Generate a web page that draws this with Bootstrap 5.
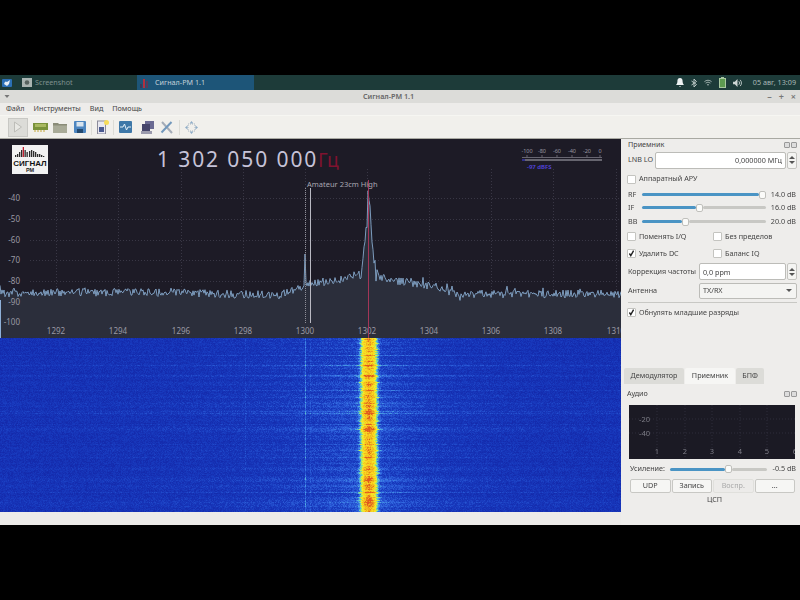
<!DOCTYPE html>
<html lang="ru">
<head>
<meta charset="utf-8">
<title>Сигнал-РМ 1.1</title>
<link href="https://cdn.jsdelivr.net/npm/bootstrap@5.3.0/dist/css/bootstrap.min.css" rel="stylesheet">
<style>
html,body{height:600px;overflow:hidden;background:#000}
body{font-family:"Noto Sans","Open Sans",sans-serif;font-size:7.2px;line-height:1;color:#333}
span,label{white-space:nowrap}
.app{height:600px;display:flex;flex-direction:column;filter:blur(.3px)}
.blackband{height:75px;flex:none;background:#000}
.blackfoot{flex:1;background:#000}
.taskbar{height:15px;flex:none;background:#1d3b39;color:#7f918f;padding-left:2px}
.taskbtn{height:15px;display:flex;align-items:center}
.task-shot{width:125px;padding-left:10px;gap:3px}
.task-act{width:117px;background:#1d5578;color:#c4d2da;padding-left:3px;gap:5px}
.tray{margin-left:auto;gap:7px;padding-right:4px;color:#a9b8b6}
.titlebar{height:13px;flex:none;background:#dcdcd9;color:#666;font-weight:600;padding:0 4px}
.titlebar .ttl{flex:1;text-align:center}
.wm{gap:7px;color:#777;font-size:9px}
.menubar{height:13px;flex:none;background:#edecea;padding-left:6px;color:#444;border-bottom:1px solid #f6f6f2;gap:9px}
.toolbar{height:23px;flex:none;background:#f1f0ec;border-bottom:1px solid #a9a9a2;padding-left:8px}
.toolbtn{width:20px;height:19px;display:flex;align-items:center;justify-content:center;flex:none}
.tool-nar{width:18px}
.tool-off{background:#dcdcd8;border:1px solid #c8c8c4}
.toolsep{width:1px;height:15px;background:#dcdcd6;flex:none}
.ml1{margin-left:1px}.ml2{margin-left:2px}
.workarea{height:386px;flex:none;display:flex}
.leftside{width:621px;flex:none;display:flex;flex-direction:column;background:#ecebe9}
.leftside svg{display:block}
.leftside canvas{display:block;filter:blur(.5px);clip-path:inset(0)}
.rightside{flex:1;min-width:0;background:#eeedeb;display:flex;flex-direction:column;color:#444}
.upperdock{height:229px;flex:none;display:grid;grid-template-rows:12px 18px 20px 11px 15px 13px 17px 17px 19px 19px 4px 17px;padding:0 3px 0 7px;align-items:center}
.rowline{display:flex;align-items:center;min-width:0}
.dockttl{justify-content:space-between}
.dockbtns{display:flex;gap:1px}
.dockbtns i{display:block;width:6px;height:6px;border:1px solid #999;border-radius:1px;background:#ddd}
.lbl1{width:27px;flex:none}
.lbl2{width:14px;flex:none}
.lblw{width:71px;flex:none}
.form-control.fld,.form-select.fld{height:17px;min-height:0;border-radius:2px;font-size:7.2px;padding:0 3px;line-height:1;border:1px solid #bcbcb8;color:#444;background-color:#fff}
.form-select.fld{height:16px;background-color:#f4f4f2;background-image:url("data:image/svg+xml,%3csvg xmlns='http://www.w3.org/2000/svg' viewBox='0 0 8 4'%3e%3cpath fill='%23555' d='M0 0h8L4 4z'/%3e%3c/svg%3e");background-size:6px 3px;background-position:right 4px center;flex:1;min-width:0}
.spin{width:10px;height:17px;flex:none;margin-left:1px;display:flex;flex-direction:column;align-items:center;justify-content:center;gap:2px;border:1px solid #c4c4c0;border-radius:2px;background:#f4f4f2}
.spin i{display:block;width:0;height:0;border-left:3px solid transparent;border-right:3px solid transparent}
.spin i:first-child{border-bottom:3px solid #555}
.spin i:last-child{border-top:3px solid #555}
.chk{display:flex;align-items:center;gap:3px;margin:0 0 0 -1px;min-height:0;padding:0}
.chk .form-check-input{width:9px;height:9px;margin:0;float:none;border:1px solid #c4c4c0;border-radius:1px;background-color:#fff;flex:none;box-shadow:none}
.chk .form-check-input:checked{background-color:#fff;border-color:#c4c4c0;background-image:url("data:image/svg+xml,%3csvg xmlns='http://www.w3.org/2000/svg' viewBox='0 0 10 10'%3e%3cpath fill='none' stroke='%23222' stroke-width='2' d='M2 5l2 3 4-7'/%3e%3c/svg%3e");background-size:100%}
.chk .form-check-label{opacity:1!important;color:#444}
.halfl{width:87px;flex:none}
.track{display:flex;align-items:center;flex:none;height:9px}
.seg{height:3px;border-radius:2px}
.seg-on{background:#4a94c4}
.seg-off{background:#c8c8c4;flex:1}
.thumb{width:7px;height:8px;flex:none;background:#fbfbf9;border:1px solid #c0c0bc;border-radius:2px}
.sl-main{width:124px}
.sl-gain{width:97px}
.val{flex:1;text-align:right;padding-right:1px;white-space:nowrap}
.rule{height:1px;background:#c8c8c4}
.tabsrow{height:16px;flex:none;padding-left:3px;border:0;gap:1px;flex-wrap:nowrap;background:transparent}
.tabsrow .nav-link{height:16px;display:flex;align-items:center;justify-content:center;padding:0;font-size:7.2px;color:#444;background:#dcdcd8;border:0;border-radius:2px 2px 0 0;margin:0}
.tabsrow .nav-link.active{background:#f6f6f4;color:#444}
.tab-a{width:60px}.tab-b{width:50px}.tab-c{width:28px}
.audiodock{flex:1;padding:0 3px 0 6px}
.audhead{height:12px;margin-top:4px;margin-bottom:5px}
.audplot{width:166px;height:54px;margin-left:2px;display:block;overflow:hidden}
.gainrow{height:14px;margin-top:3px;margin-left:3px}
.gainrow .glab{width:40px;flex:none}
.btnrow{margin-top:3px;margin-left:3px;gap:1px;width:165px}
.btnrow .btn{flex:1;height:14px;padding:0;font-size:7.2px;line-height:1;border-radius:2px;background:#f6f6f4;border:1px solid #c8c8c4;color:#444}
.btnrow .btn:disabled{color:#aaa;background:#ecebe9;border-color:#e0e0dc;opacity:1}
.dspnote{text-align:center;margin-top:3px;padding-left:5px;height:10px}
</style>
</head>
<body>
<div class="app">
  <div class="blackband"></div>

  <div class="taskbar d-flex align-items-center">
    <svg width="10" height="10" viewBox="0 0 10 10"><rect x="0" y="1" width="10" height="8" rx="1" fill="#2b6fb5"/><path d="M2 6c1-3 2-3 3-2l3-2-1 4-2 2z" fill="#e6eef6"/></svg>
    <div class="taskbtn task-shot">
      <svg width="10" height="9" viewBox="0 0 10 9"><rect width="10" height="9" fill="#a9b4b2"/><circle cx="5" cy="4.5" r="2.3" fill="#56625f"/></svg><span>Screenshot</span>
    </div>
    <div class="taskbtn task-act">
      <svg width="10" height="10" viewBox="0 0 10 10"><rect x="0" y="6" width="2" height="4" fill="#3a3a5a"/><rect x="3" y="1" width="2" height="9" fill="#b03040"/><rect x="6" y="3" width="2" height="7" fill="#5a3a5a"/></svg><span>Сигнал-РМ 1.1</span>
    </div>
    <div class="tray d-flex align-items-center">
      <svg width="8" height="9" viewBox="0 0 8 9"><path d="M4 0c2 0 2.600 1.500 2.600 3.500S8 7 8 7H0s1.400-1.500 1.400-3.500S2 0 4 0zM3 8h2l-1 1z" fill="#eef2f2"/></svg>
      <svg width="6" height="10" viewBox="0 0 6 10"><path d="M0.500 3l5 3.500L3 9V1l2.500 2.500L.5 7" fill="none" stroke="#b9c6c4" stroke-width="1"/></svg>
      <svg width="8" height="7" viewBox="0 0 10 8"><path d="M.5 3a6.500 6.500 0 0 1 9 0M2 4.800a4.500 4.500 0 0 1 6 0" fill="none" stroke="#b9c6c4"/><circle cx="5" cy="6.800" r="1" fill="#b9c6c4"/></svg>
      <svg width="7" height="11" viewBox="0 0 7 11"><rect x="2" y="0" width="3" height="1.500" fill="#a8c8a0"/><rect x=".5" y="1.500" width="6" height="9" fill="#5d9a50" stroke="#a8c8a0"/></svg>
      <svg width="9" height="8" viewBox="0 0 10 9"><path d="M0 3h2l3-3v9L2 6H0z" fill="#cfd8d6"/><path d="M6.500 2.500a3 3 0 0 1 0 4M8 1a5 5 0 0 1 0 7" fill="none" stroke="#cfd8d6"/></svg>
      <span class="ms-1">05 авг, 13:09</span>
    </div>
  </div>

  <div class="titlebar d-flex align-items-center">
    <svg width="6" height="5" viewBox="0 0 6 5"><path d="M.5 1h5L3 4z" fill="#777"/></svg>
    <div class="ttl">Сигнал-РМ 1.1</div>
    <div class="wm d-flex"><span>–</span><span>+</span><span>×</span></div>
  </div>

  <div class="menubar d-flex align-items-center">
    <span>Файл</span><span>Инструменты</span><span>Вид</span><span>Помощь</span>
  </div>

  <div class="toolbar d-flex align-items-center">
    <div class="toolbtn tool-off"><svg width="10" height="12" viewBox="0 0 10 12"><path d="M1.500 1l7 5-7 5z" fill="#e8e8e4" stroke="#bdbdb8"/></svg></div>
    <div class="toolbtn ml2"><svg width="15" height="10" viewBox="0 0 15 10"><rect y="1" width="15" height="7" fill="#79923a"/><rect x="2" y="2" width="11" height="3" fill="#a8b860"/><path d="M2 8v2M5 8v2M8 8v2M11 8v2" stroke="#c4a838"/></svg></div>
    <div class="toolbtn"><svg width="14" height="11" viewBox="0 0 14 11"><path d="M0 1h5l1 1h8v9H0z" fill="#8a8c78"/><rect y="3.500" width="14" height="7.500" fill="#a9ab98"/></svg></div>
    <div class="toolbtn"><svg width="12" height="12" viewBox="0 0 12 12"><rect width="12" height="12" rx="1" fill="#4d86c0"/><rect x="2.500" y="1" width="7" height="4.500" fill="#d8e4ee"/><rect x="3" y="8" width="6" height="4" fill="#23496f"/></svg></div>
    <div class="toolsep ml1"></div>
    <div class="toolbtn"><svg width="13" height="14" viewBox="0 0 13 14"><rect x="1.500" y="1" width="8" height="13" fill="#e8e8f0" stroke="#8b8b9a"/><rect x="3" y="7" width="5" height="5" fill="#4a5a90"/><circle cx="10.500" cy="2.500" r="2.500" fill="#f6dc5a"/></svg></div>
    <div class="toolsep ml1"></div>
    <div class="toolbtn ml1"><svg width="13" height="12" viewBox="0 0 13 12"><rect width="13" height="12" rx="1" fill="#3e78a8"/><path d="M1 6h3l1.500-3 2 6L9 6h3" fill="none" stroke="#e4f0f8"/></svg></div>
    <div class="toolbtn tool-nar ms-1"><svg width="14" height="13" viewBox="0 0 14 13"><rect x="4" y="0" width="9" height="8" fill="#6a6a92"/><rect x="1" y="3" width="8" height="7" fill="#45456a"/><rect x="0" y="10" width="11" height="3" fill="#9a9aac"/></svg></div>
    <div class="toolbtn tool-nar"><svg width="13" height="13" viewBox="0 0 13 13"><path d="M2 1l10 11" stroke="#a4acb8" stroke-width="2"/><path d="M11.500 1L1.500 11.500" stroke="#7298bc" stroke-width="2"/></svg></div>
    <div class="toolsep ms-1"></div>
    <div class="toolbtn ml1"><svg width="13" height="13" viewBox="0 0 13 13"><rect x="3" y="3" width="7" height="7" fill="none" stroke="#a8b4c0" stroke-dasharray="1 1"/><path d="M6.500 0l2 2.500h-4zM6.500 13l2-2.500h-4zM0 6.500l2.500-2v4zM13 6.500l-2.500-2v4z" fill="#8fadc8"/></svg></div>
  </div>

  <div class="workarea">
    <div class="leftside">
      <svg id="spectrum" width="621" height="199" viewBox="0 0 621 199" font-family="'Noto Sans',sans-serif"></svg>
      <canvas id="fall" width="621" height="174"></canvas>
    </div>

    <div class="rightside">
      <div class="upperdock">
        <div class="rowline dockttl"><span>Приемник</span><span class="dockbtns"><i></i><i></i></span></div>
        <div class="rowline"><span class="lbl1">LNB LO</span><input class="form-control fld text-end" value="0,000000 МГц" readonly><span class="spin"><i></i><i></i></span></div>
        <div class="rowline"><label class="form-check chk"><input class="form-check-input" type="checkbox"><span class="form-check-label">Аппаратный АРУ</span></label></div>
        <div class="rowline"><span class="lbl2">RF</span><div class="track sl-main"><div class="seg seg-on" style="width:117px"></div><div class="thumb"></div></div><span class="val">14.0 dB</span></div>
        <div class="rowline"><span class="lbl2">IF</span><div class="track sl-main"><div class="seg seg-on" style="width:54px"></div><div class="thumb"></div><div class="seg seg-off"></div></div><span class="val">16.0 dB</span></div>
        <div class="rowline"><span class="lbl2">BB</span><div class="track sl-main"><div class="seg seg-on" style="width:40px"></div><div class="thumb"></div><div class="seg seg-off"></div></div><span class="val">20.0 dB</span></div>
        <div class="rowline"><label class="form-check chk halfl"><input class="form-check-input" type="checkbox"><span class="form-check-label">Поменять I/Q</span></label><label class="form-check chk"><input class="form-check-input" type="checkbox"><span class="form-check-label">Без пределов</span></label></div>
        <div class="rowline"><label class="form-check chk halfl"><input class="form-check-input" type="checkbox" checked><span class="form-check-label">Удалить DC</span></label><label class="form-check chk"><input class="form-check-input" type="checkbox"><span class="form-check-label">Баланс IQ</span></label></div>
        <div class="rowline"><span class="lblw">Коррекция частоты</span><input class="form-control fld" value="0,0 ppm" readonly><span class="spin"><i></i><i></i></span></div>
        <div class="rowline"><span class="lblw">Антенна</span><select class="form-select fld"><option>TX/RX</option></select></div>
        <div class="rule"></div>
        <div class="rowline"><label class="form-check chk"><input class="form-check-input" type="checkbox" checked><span class="form-check-label">Обнулять младшие разряды</span></label></div>
      </div>

      <ul class="nav nav-tabs tabsrow">
        <li class="nav-item"><span class="nav-link tab-a">Демодулятор</span></li>
        <li class="nav-item"><span class="nav-link tab-b active">Приемник</span></li>
        <li class="nav-item"><span class="nav-link tab-c">БПФ</span></li>
      </ul>

      <div class="audiodock">
        <div class="rowline dockttl audhead"><span>Аудио</span><span class="dockbtns"><i></i><i></i></span></div>
        <svg class="audplot" viewBox="0 0 166 54" font-family="'Noto Sans',sans-serif" font-size="7.500" fill="#7d7d86">
          <rect width="166" height="54" fill="#1b1a24"/>
          <g stroke="#2e2d3a" stroke-dasharray="1 2"><path d="M0 14h166M0 28h166M28 0v54M56 0v54M83 0v54M111 0v54M138 0v54"/></g>
          <text x="10" y="17">-20</text><text x="10" y="31">-40</text>
          <g text-anchor="middle"><text x="28" y="49">1</text><text x="56" y="49">2</text><text x="83" y="49">3</text><text x="111" y="49">4</text><text x="138" y="49">5</text><text x="166" y="49">6</text></g>
        </svg>
        <div class="rowline gainrow"><span class="glab">Усиление:</span><div class="track sl-gain"><div class="seg seg-on" style="width:55px"></div><div class="thumb"></div><div class="seg seg-off"></div></div><span class="val">-0.5 dB</span></div>
        <div class="d-flex btnrow">
          <button class="btn" type="button">UDP</button>
          <button class="btn" type="button">Запись</button>
          <button class="btn" type="button" disabled>Воспр.</button>
          <button class="btn" type="button">...</button>
        </div>
        <div class="dspnote">ЦСП</div>
      </div>
    </div>
  </div>

  <div class="blackfoot"></div>
</div>

<script src="https://cdn.jsdelivr.net/npm/bootstrap@5.3.0/dist/js/bootstrap.bundle.min.js"></script>
<script>
// Seeded noise so the picture is stable
var seed=12345;function R(){seed=(seed*1664525+1013904223)>>>0;return seed/4294967296;}

// ---- spectrum (coordinates: y = screen y - 139)
function baseY(x){
  var P=[[0,154],[130,153],[280,156],[300,148],[313,144],[340,141],[357,138],[362,128],[365,108],[369,61],[373,104],[377,131],[380,137],[393,142],[413,144],[436,148],[460,158],[470,155],[621,155]];
  for(var i=1;i<P.length;i++){if(x<=P[i][0]){var a=P[i-1],b=P[i];return a[1]+(b[1]-a[1])*(x-a[0])/(b[0]-a[0]);}}
  return 155;
}
var pts=[];
for(var x=0;x<=621;x+=1){
  var n=(R()-.5)*8+(R()<.07?-(R()*7):0);
  var near=Math.abs(x-368)<9?(R()-.35)*26:0;
  var yy=baseY(x)+n+near;
  if(x==305)yy=115;
  if(x==368)yy=52;
  pts.push(x+" "+yy.toFixed(1));
}
var line="M"+pts.join("L");
var s='';
// grid
var gy=[59,80,101,121,142,163,183],gx=[56,118,181,243,305,367,429,491,553,616];
s+='<rect width="621" height="199" fill="#1d1b26"/>';
s+='<g stroke="#393745" stroke-dasharray="1 2">';
gy.forEach(function(y){s+='<path d="M30 '+(y+.5)+'H621"/>';});
gx.forEach(function(x){s+='<path d="M'+(x+.5)+' 30V184"/>';});
s+='</g>';
// trace
s+='<path d="'+line+'L621 199L0 199Z" fill="#2b2e3b"/>';
s+='<path d="'+line+'" fill="none" stroke="#86a8cc" stroke-width=".9"/>';
// axis labels
var dbs=["-40","-50","-60","-70","-80","-90","-100"];
s+='<g font-size="8" fill="#9a99a3" text-anchor="end">';
dbs.forEach(function(t,i){s+='<text x="20" y="'+(gy[i]+3)+'">'+t+'</text>';});
s+='</g><g font-size="8" fill="#9a99a3" text-anchor="middle">';
["1292","1294","1296","1298","1300","1302","1304","1306","1308","1310"].forEach(function(t,i){s+='<text x="'+gx[i]+'" y="195">'+t+'</text>';});
s+='</g>';
// markers
s+='<path d="M305.500 49V184" stroke="#8f8f98" stroke-dasharray="1 1"/>';
s+='<path d="M310.500 49V184" stroke="#b9b9c2"/>';
s+='<path d="M368.500 41V199" stroke="#a33658" stroke-width="1"/>';
s+='<path d="M.5 161V199" stroke="#8fb0d8"/>';
s+='<text x="307" y="48" font-size="7.500" fill="#a9a8b2">Amateur 23cm High</text>';
// logo
s+='<rect x="12" y="6" width="36" height="29" fill="#f2f2f2"/>';
var bars=[[15,2],[17,3],[19,5],[21,7],[22.7,10,1],[24.500,7],[26.500,5],[29,6],[31,7],[33,6],[35,5],[37,3],[39,3],[41,2],[43,1]];
bars.forEach(function(b){s+='<rect x="'+b[0]+'" y="'+(18-b[1])+'" width="1.300" height="'+b[1]+'" fill="'+(b[2]?'#c02030':'#2a2a2a')+'"/>';});
s+='<text x="30" y="26.500" font-size="8" font-weight="700" fill="#111" text-anchor="middle" font-family="\'Liberation Sans\',sans-serif">СИГНАЛ</text>';
s+='<text x="30" y="33" font-size="5.500" font-weight="700" fill="#222" text-anchor="middle" font-family="\'Liberation Sans\',sans-serif">РМ</text>';
// frequency
s+='<text x="157" y="28" font-size="21" letter-spacing="1.900" fill="#c6c3d8">1 302 050 000</text>';
s+='<text x="318" y="28" font-size="19" fill="#80122f">Гц</text>';
// level meter
s+='<g font-size="5.500" fill="#9a99a3" text-anchor="middle">';
[["-100",527],["-80",542],["-60",557],["-40",572],["-20",587],["0",600]].forEach(function(a){s+='<text x="'+a[1]+'" y="14">'+a[0]+'</text>';});
s+='</g>';
s+='<path d="M522 18.500H602" stroke="#9a99a3" stroke-width=".6"/>';
s+='<path d="M527 16V18M542 16V18M557 16V18M572 16V18M587 16V18M600 16V18" stroke="#9a99a3" stroke-width=".6"/>';
s+='<rect x="522" y="20" width="80" height="2" fill="#66656f"/><rect x="522" y="20" width="3" height="2" fill="#30308a"/>';
s+='<text x="527" y="30" font-size="6" font-weight="600" fill="#5546e0">-97 dBFS</text>';
document.getElementById('spectrum').innerHTML=s;

// ---- waterfall
(function(){
  var c=document.getElementById('fall'),g=c.getContext('2d'),W=621,H=174,im=g.createImageData(W,H),D=im.data;
  var stops=[[0,[18,36,165]],[.2,[24,58,190]],[.36,[50,105,225]],[.46,[80,175,225]],[.58,[140,225,130]],[.68,[238,238,50]],[.8,[250,215,30]],[.9,[240,178,30]],[1,[225,90,30]]];
  function cm(v){v=Math.max(0,Math.min(1,v));for(var i=1;i<stops.length;i++){if(v<=stops[i][0]){var a=stops[i-1],b=stops[i],t=(v-a[0])/(b[0]-a[0]);return[a[1][0]+(b[1][0]-a[1][0])*t,a[1][1]+(b[1][1]-a[1][1])*t,a[1][2]+(b[1][2]-a[1][2])*t];}}return stops[stops.length-1][1];}
  var rows=[],r=0;
  for(var y=0;y<H;y++){r=r*.6+(R()-.5)*.06;var sp=R()<.1?.04+R()*.07:0;rows.push(r+sp);}
  for(y=0;y<H;y++){
    var wob=R()<.12?1+R():0,peak=R()*R()*.16;
    for(var x=0;x<W;x++){
      var dx=Math.abs(x-368.5);
      var skirt=.13*Math.exp(-dx/50)+.05*Math.exp(-Math.abs(x-320)/180);
      var v=.12+skirt+rows[y]*(.6+1.3*Math.exp(-dx/70))+(R()-.5)*.15;
      v=Math.max(v,.05);
      if(dx>12)v=Math.min(v,.42);
      v+=.58*Math.exp(-Math.pow(dx/(8.5+wob),4));
      v+=peak*Math.exp(-Math.pow(dx/2.5,2));
      if(x==305)v+=.16;
      if(x==310)v+=.05;
      if(x==245)v+=.05;
      var col=cm(v),i=(y*W+x)*4;
      D[i]=col[0];D[i+1]=col[1];D[i+2]=col[2];D[i+3]=255;
    }
  }
  g.putImageData(im,0,0);
})();
</script>
</body>
</html>
